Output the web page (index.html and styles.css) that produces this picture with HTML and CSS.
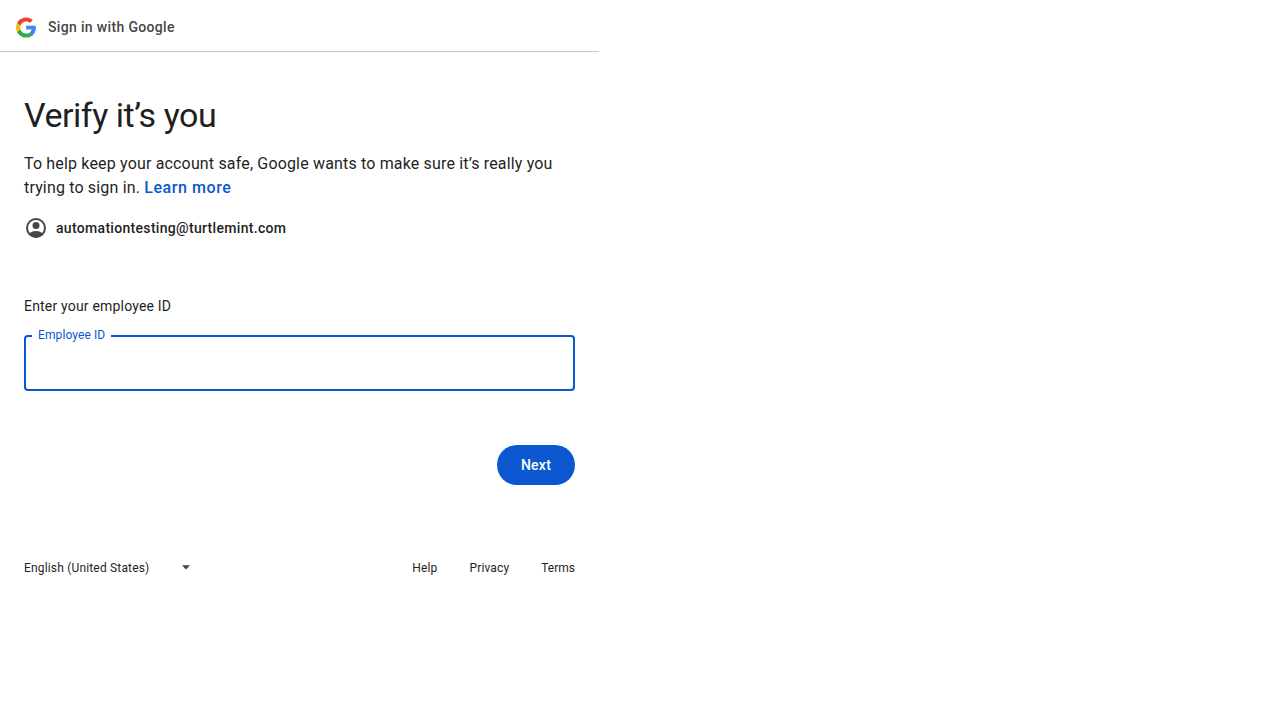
FILE: index.html
```html
<!DOCTYPE html>
<html lang="en">
<head>
<meta charset="utf-8">
<title>Sign in</title>
<link rel="stylesheet" href="styles.css">
</head>
<body>
<div class="page">
  <header class="top">
    <svg class="logo" viewBox="2 2 43.5 44"><path fill="#4285F4" d="M45.12 24.5c0-1.56-.14-3.06-.4-4.5H24v8.51h11.84c-.51 2.75-2.06 5.08-4.39 6.64v5.52h7.11c4.16-3.83 6.56-9.47 6.56-16.17z"/><path fill="#34A853" d="M24 46c5.94 0 10.92-1.97 14.56-5.33l-7.11-5.52c-1.97 1.32-4.49 2.1-7.45 2.1-5.73 0-10.58-3.87-12.31-9.07H4.34v5.7C7.96 41.07 15.4 46 24 46z"/><path fill="#FBBC04" d="M11.69 28.18C11.25 26.86 11 25.45 11 24s.25-2.86.69-4.18v-5.7H4.34C2.85 17.09 2 20.45 2 24s.85 6.91 2.34 9.88l7.35-5.7z"/><path fill="#EA4335" d="M24 10.75c3.23 0 6.13 1.11 8.41 3.29l6.31-6.31C34.91 4.18 29.93 2 24 2 15.4 2 7.96 6.93 4.34 14.12l7.35 5.7c1.73-5.2 6.58-9.07 12.31-9.07z"/></svg>
    <span class="brand">Sign in with Google</span>
  </header>
  <main class="main">
    <h1 class="title">Verify it’s you</h1>
    <p class="intro"><span class="line">To help keep your account safe, Google wants to make sure it’s really you</span><span class="line">trying to sign in. <a class="learn">Learn more</a></span></p>
    <div class="account">
      <svg class="avatar" viewBox="0 0 24 24"><circle cx="12" cy="12" r="9" fill="none" stroke="#444746" stroke-width="2"/><path fill="#444746" d="M5.2 17.5C7 15.8 9.400 15 12 15s5 .8 6.800 2.500C17.500 20 15 21.500 12 21.500S6.500 20 5.200 17.500z"/><circle cx="12" cy="9.500" r="3.500" fill="#444746"/></svg>
      <span class="email">automationtesting@turtlemint.com</span>
    </div>
    <div class="prompt">Enter your employee ID</div>
    <div class="field"><input class="input" aria-label="Employee ID"><span class="label">Employee ID</span></div>
    <div class="actions"><button class="next">Next</button></div>
  </main>
  <footer class="footer">
    <span class="lang"><span class="lang-name">English (United States)</span><svg class="caret" viewBox="0 0 8 5"><path fill="#444746" d="M0 .3h8L4 4.500z"/></svg></span>
    <nav class="links"><a class="help">Help</a><a class="privacy">Privacy</a><a class="terms">Terms</a></nav>
  </footer>
</div>
</body>
</html>
```
FILE: styles.css
```css
* { box-sizing: border-box; }
body { margin: 0; background: #fff; color: #1f1f1f; font-family: Roboto, sans-serif; }
.page { width: 599px; }
.top { display: flex; align-items: center; height: 52px; padding: 3px 16px 0; border-bottom: 1px solid #c4c7c5; }
.logo { width: 20px; height: 21px; margin-right: 12px; }
.brand { font-size: 14px; font-weight: 500; letter-spacing: .34px; color: #444746; }
.main { padding: 0 24px; }
.title { margin: 41px 0 0; font-size: 34px; line-height: 44px; font-weight: 400; letter-spacing: -.48px; white-space: nowrap; }
.intro { margin: 15px 0 0; font-size: 16px; line-height: 24px; letter-spacing: .165px; white-space: nowrap; }
.line { display: block; }
.learn { font-weight: 500; letter-spacing: .57px; color: #0b57d0; }
.account { display: flex; align-items: center; height: 24px; margin-top: 16px; font-size: 14px; font-weight: 500; letter-spacing: .31px; }
.avatar { width: 24px; height: 24px; margin-right: 8px; }
.prompt { margin-top: 56px; height: 20px; font-size: 14px; line-height: 20px; letter-spacing: .19px; }
.field { position: relative; height: 56px; margin-top: 19px; }
.input { display: block; width: 100%; height: 56px; border: 2px solid #0b57d0; border-radius: 4px; outline: none; background: #fff; padding: 0 14px; }
.label { position: absolute; left: 8px; top: -8px; width: 79px; padding: 0 6px; background: #fff; color: #0b57d0; font-size: 12px; line-height: 16px; letter-spacing: .1px; white-space: nowrap; }
.actions { display: flex; justify-content: flex-end; margin-top: 54px; }
.next { width: 78px; height: 40px; border: 0; border-radius: 20px; padding: 0; background: #0b57d0; color: #fff; font: 500 14px Roboto, sans-serif; letter-spacing: .25px; }
.footer { display: flex; justify-content: space-between; align-items: center; height: 16px; margin-top: 75px; padding: 0 24px; font-size: 12px; }
.lang { display: flex; align-items: center; justify-content: space-between; width: 166px; }
.lang-name { letter-spacing: .17px; }
.caret { width: 8px; height: 5px; margin-bottom: 1px; }
.links { display: flex; gap: 32px; }
.help { letter-spacing: .2px; }
.privacy { letter-spacing: .14px; }
```
